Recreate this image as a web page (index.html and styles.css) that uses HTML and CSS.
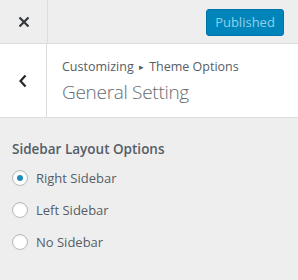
FILE: index.html
```html
<!DOCTYPE html>
<html>
<head>
<title>Customizer</title>
<link rel="stylesheet" href="styles.css">
</head>
<body>

<div class="topbar">
    <div class="close-btn">
        <svg width="12" height="12" viewBox="0 0 12 12"><path d="M1.5 1.5 L10.5 10.5 M10.5 1.5 L1.5 10.5" stroke="#32373c" stroke-width="2.2" fill="none"/></svg>
    </div>
    <button class="publish">Published</button>
</div>

<div class="section-head">
    <div class="back-btn">
        <svg width="10" height="14" viewBox="0 0 10 14"><path d="M7.5 1.5 L2.5 7 L7.5 12.5" stroke="#23282d" stroke-width="2.2" fill="none"/></svg>
    </div>
    <div class="titles">
        <div class="crumb">Customizing <span class="arrow">&#9656;</span> Theme Options</div>
        <h3>General Setting</h3>
    </div>
</div>

<div class="control">
    <div class="control-title">Sidebar Layout Options</div>
    <label class="radio"><span class="dot checked"></span>Right Sidebar</label>
    <label class="radio"><span class="dot"></span>Left Sidebar</label>
    <label class="radio"><span class="dot"></span>No Sidebar</label>
</div>

</body>
</html>
```

FILE: styles.css
```css
/* Customizer panel */
body {
    margin: 0;
    background: #eeeeee;
    font-family: "Open Sans", "Noto Sans", sans-serif;
    color: #555d66;
}

.topbar {
    height: 43px;
    border-bottom: 1px solid #dddddd;
    display: flex;
    justify-content: space-between;
    align-items: center;
}

.close-btn {
    width: 47px;
    height: 43px;
    border-right: 1px solid #dddddd;
    display: flex;
    align-items: center;
    justify-content: center;
}

.publish {
    width: 78px;
    height: 27px;
    margin-right: 14px;
    margin-top: 1px;
    background: #0085ba;
    border: 1px solid #0073aa;
    border-radius: 3px;
    color: #8fd0ec;
    font-family: "Open Sans", "Noto Sans", sans-serif;
    font-size: 13px;
    padding: 0;
}

.section-head {
    height: 73px;
    background: #ffffff;
    border-bottom: 1px solid #dddddd;
    display: flex;
}

.back-btn {
    width: 46px;
    border-right: 1px solid #dddddd;
    display: flex;
    align-items: center;
    justify-content: center;
}

.titles {
    padding: 13px 0 0 15px;
}

.crumb {
    font-size: 12.5px;
    line-height: 20px;
    color: #555d66;
}

.arrow {
    font-size: 9px;
    position: relative;
    top: -1px;
    margin: 0 2px;
}

h3 {
    margin: 1px 0 0;
    font-size: 19px;
    font-weight: 300;
    line-height: 27px;
    color: #666c73;
    letter-spacing: -0.3px;
}

.control {
    padding: 21px 12px;
}

.control-title {
    font-size: 13.5px;
    font-weight: 600;
    line-height: 20px;
    margin-bottom: 3px;
}

.radio {
    display: flex;
    align-items: center;
    height: 32px;
    font-size: 13px;
    color: #555d66;
}

.dot {
    width: 14px;
    height: 14px;
    border: 1px solid #b4b9be;
    border-radius: 50%;
    background: #ffffff;
    box-shadow: inset 0 1px 2px rgba(0, 0, 0, 0.07);
    margin-right: 8px;
    display: flex;
    align-items: center;
    justify-content: center;
}

.dot.checked::after {
    content: "";
    width: 6px;
    height: 6px;
    border-radius: 50%;
    background: #1e8cbe;
}
```
